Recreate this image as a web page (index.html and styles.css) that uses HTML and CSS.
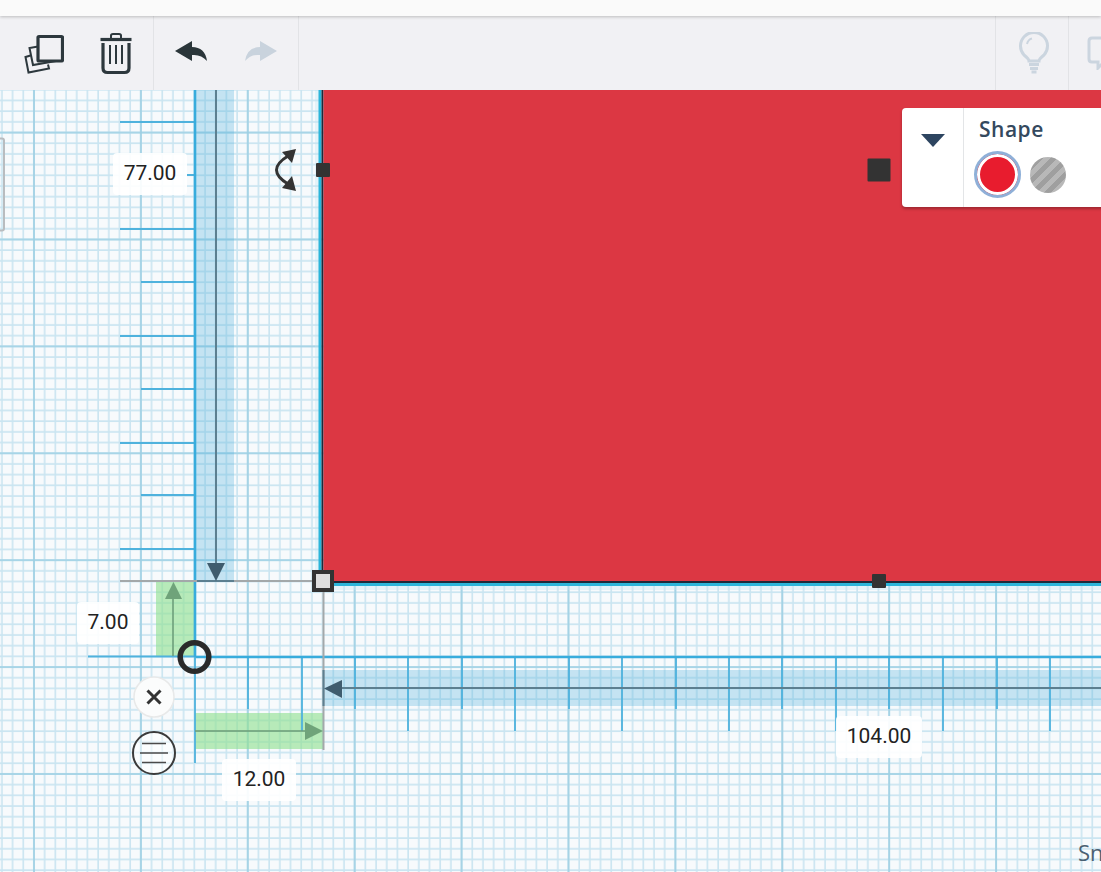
FILE: index.html
```html
<!DOCTYPE html>
<html>
<head>
    <meta charset="utf-8">
    <title>Workplane</title>
    <link rel="stylesheet" href="styles.css">
</head>
<body>
    <div class="topbar"></div>
    <div class="toolbar">
        <div class="toolgroup editgroup">
            <svg class="icon" width="40" height="40" viewBox="24 33 40 40">
                <path class="stroke thin" d="M30.500 54.500 L25.500 56 L28.500 71.500 L49 67.500 L48 63.500" fill="none" />
                <path class="stroke thin" d="M38 45.500 L29.500 47 L33 64 L56 60" fill="none" />
                <rect class="stroke" x="38" y="35.500" width="24.500" height="24.500" rx="1" fill="#f1f1f4" />
            </svg>
            <svg class="icon" width="32" height="42" viewBox="100 31 32 42">
                <path class="stroke" d="M103 41 V66 Q103 70.500 107.500 70.500 H124.500 Q129 70.500 129 66 V41" fill="none" />
                <path class="stroke" d="M100.500 37.500 H131.500" fill="none" />
                <path class="stroke thin" d="M111 36 V33.500 Q111 32 113 32 H119 Q121 32 121 33.500 V36" fill="none" />
                <path class="stroke thin" d="M110 43 V62 M116 43 V62 M122 43 V62" fill="none" />
            </svg>
        </div>
        <div class="toolgroup historygroup">
            <svg class="icon" width="32" height="22" viewBox="175 39 32 22">
                <path class="solid" d="M175 51 L192 41 V47 Q205 47 207 61 Q201 54 192 55 V61 Z" />
            </svg>
            <svg class="icon" width="32" height="22" viewBox="245 39 32 22">
                <path class="solid faded" d="M277 51 L260 41 V47 Q247 47 245 61 Q251 54 260 55 V61 Z" />
            </svg>
        </div>
        <div class="toolspacer"></div>
        <div class="toolgroup hintgroup">
            <svg class="icon" width="32" height="42" viewBox="1017 32 32 42">
                <path class="hintline" d="M1028 61 Q1028 59 1023 55 A13.500 13.500 0 1 1 1043 55 Q1038 59 1038 61 Z" fill="none" />
                <path class="hintline" d="M1028 64.500 H1038 M1029 68.500 H1037 M1030.500 72 H1035.500" fill="none" />
                <path class="hintline thin" d="M1026 44 Q1027 39.500 1031 38.500" fill="none" />
            </svg>
        </div>
        <div class="toolgroup notegroup">
            <svg class="icon" width="32" height="34" viewBox="1087 35 32 34">
                <path class="hintline" d="M1092 37 H1112 Q1115 37 1115 40 V58 Q1115 61 1112 61 H1104 L1098 67 V61 H1092 Q1089 61 1089 58 V40 Q1089 37 1092 37 Z" fill="none" />
            </svg>
        </div>
    </div>

    <div class="workplane">
        <svg class="drawing" width="1101" height="782" viewBox="0 90 1101 782">
            <defs>
                <pattern id="minor" patternUnits="userSpaceOnUse" x="29" y="127.600" width="10.690" height="10.690">
                    <path d="M5 0 V10.690 M0 5 H10.690" stroke="#cae5f1" stroke-width="1.600" fill="none" />
                </pattern>
                <pattern id="major" patternUnits="userSpaceOnUse" x="29" y="127.600" width="106.900" height="106.900">
                    <path d="M5 0 V106.900 M0 5 H106.900" stroke="#9ccfe3" stroke-width="1.600" fill="none" />
                </pattern>
            </defs>
            <rect x="0" y="90" width="1101" height="782" fill="#f7fafc" />
            <rect x="0" y="90" width="1101" height="782" fill="url(#minor)" />
            <rect x="0" y="90" width="1101" height="782" fill="url(#major)" />

            <!-- left panel edge -->
            <rect x="-6" y="138.500" width="10" height="92" rx="2" fill="none" stroke="#b9bcbf" stroke-width="2" />

            <!-- blue measure bars -->
            <rect class="measurebar" x="196" y="90" width="38" height="491" />
            <rect class="measurebar" x="323" y="670" width="778" height="36" />

            <!-- green offset bars -->
            <rect class="offsetbar" x="156" y="581" width="39" height="75" />
            <rect class="offsetbar" x="195" y="713" width="128" height="36" />

            <!-- rulers -->
            <path class="ruler" d="M120 122 H195 M187 175 H195 M120 229 H195 M141 282 H195 M120 336 H195 M141 389 H195 M120 443 H195 M141 495 H195 M120 549 H195" />
            <path class="ruler" d="M248 657 V709 M302 657 V731 M355 657 V709 M408 657 V731 M462 657 V709 M515 657 V731 M569 657 V709 M622 657 V731 M676 657 V709 M729 657 V731 M782 657 V709 M836 657 V731 M889 657 V709 M943 657 V731 M997 657 V709 M1050 657 V731" />
            <path class="ruler" d="M88 656.500 H195" />
            <path class="axis" d="M195 90 V657 M195 657 H1101" />
            <path class="ruler" d="M195 657 V763" />

            <!-- dimension lines -->
            <path class="baseline" d="M120 581 H312 M323.500 592 V750" />
            <path class="dimline" d="M216 90 V565 M197 581 H234" />
            <path class="dimarrow" d="M207 563 H225 L216 581 Z" />
            <path class="dimline" d="M340 688 H1101 M323.500 670 V706" />
            <path class="dimarrow" d="M324 688.500 L342 680 V698 Z" />
            <path class="offsetline" d="M173 598 V656 M195 731 H306" />
            <path class="offsetarrow" d="M173.500 582 L182 599 H165 Z" />
            <path class="offsetarrow" d="M323 731 L305 722 V740 Z" />

            <!-- selected shape -->
            <rect x="315" y="90" width="786" height="500" fill="#bfe6f3" opacity="0.350" />
            <path d="M320 90 V584.500 H1101" fill="none" stroke="#2bb5da" stroke-width="3" />
            <path d="M322.500 90 V582 H1101" fill="none" stroke="#1d2a3a" stroke-width="2" />
            <rect x="323.500" y="90" width="778" height="491" fill="#dc3743" />

            <!-- rotate handle -->
            <path class="rotate" d="M288 156 Q265 170 288 184" fill="none" />
            <path class="handle" d="M296 149 L282 152 L292 163 Z M296 191 L282 188 L292 176 Z" />

            <!-- size handles -->
            <rect class="handle" x="316" y="163" width="14" height="14" rx="1" />
            <rect class="handle" x="872" y="574" width="14" height="14" rx="1" />
            <rect class="handle" x="867.500" y="158.500" width="23" height="23" rx="1" />
            <rect x="314" y="572" width="18" height="18" fill="#dedede" stroke="#333333" stroke-width="4" />

            <!-- origin controls -->
            <circle cx="194.500" cy="657" r="14.300" fill="none" stroke="#2a2a2a" stroke-width="5.500" />
            <circle cx="154" cy="697" r="20" fill="#fbfcfc" stroke="#e8e9e9" stroke-width="1.500" />
            <path d="M147.500 690.500 L160.500 703.500 M160.500 690.500 L147.500 703.500" stroke="#333333" stroke-width="3" fill="none" />
            <circle cx="154" cy="753" r="21" fill="#ffffff" fill-opacity="0.500" stroke="#3b3b3b" stroke-width="2" />
            <path d="M142 743.500 H166 M140 753 H168 M142 762.500 H166" stroke="#4a4a4a" stroke-width="1.500" fill="none" />
        </svg>

        <div class="dimlabel label77">77.00</div>
        <div class="dimlabel label7">7.00</div>
        <div class="dimlabel label12">12.00</div>
        <div class="dimlabel label104">104.00</div>

        <div class="shapepanel">
            <div class="paneltoggle"><span class="caret"></span></div>
            <div class="panelbody">
                <div class="paneltitle">Shape</div>
                <div class="swatches">
                    <span class="swatch solidswatch"></span>
                    <span class="swatch holeswatch"></span>
                </div>
            </div>
        </div>

        <div class="snapgrid">Snap Grid</div>
    </div>
</body>
</html>
```

FILE: styles.css
```css
html, body {
    margin: 0;
    height: 100%;
    overflow: hidden;
}
body {
    display: flex;
    flex-direction: column;
    font-family: "Open Sans", sans-serif;
    background: #f1f1f4;
}

.topbar {
    height: 16px;
    background: #fafafa;
    box-shadow: 0 1px 3px rgba(0, 0, 0, 0.22);
    position: relative;
    z-index: 1;
}

.toolbar {
    height: 74px;
    display: flex;
    background: #f1f1f4;
}
.toolgroup {
    display: flex;
    align-items: center;
    box-sizing: border-box;
    border-right: 1px solid #e2e3e6;
}
.toolspacer {
    flex: 1;
}
.editgroup {
    width: 154px;
    padding: 2px 0 0 24px;
    gap: 36px;
}
.historygroup {
    width: 145px;
    padding: 0 0 6px 21px;
    gap: 38px;
}
.hintgroup {
    width: 74px;
    padding: 0 0 0 22px;
    border-left: 1px solid #e2e3e6;
}
.notegroup {
    width: 32px;
    padding-left: 18px;
    border-right: 0;
    overflow: hidden;
}
.icon {
    display: block;
    flex: none;
}
.stroke {
    stroke: #2d383d;
    stroke-width: 3.200;
}
.thin {
    stroke-width: 2;
}
.solid {
    fill: #2a3539;
}
.faded {
    fill: #c9d3dd;
}
.hintline {
    stroke: #cbd5df;
    stroke-width: 3;
}
.hintline.thin {
    stroke-width: 2;
}

.workplane {
    position: relative;
    flex: 1;
    overflow: hidden;
}
.drawing {
    display: block;
    filter: blur(0.4px);
}
.measurebar {
    fill: #4fb0dc;
    opacity: 0.3;
}
.offsetbar {
    fill: #8fe08f;
    opacity: 0.62;
}
.ruler {
    stroke: #4fb2dd;
    stroke-width: 1.800;
    fill: none;
}
.axis {
    stroke: #38acdc;
    stroke-width: 2.600;
    fill: none;
}
.baseline {
    stroke: #a3a8aa;
    stroke-width: 2;
    fill: none;
}
.dimline {
    stroke: #5c7f90;
    stroke-width: 2;
    fill: none;
}
.dimarrow {
    fill: #3f5c6e;
}
.offsetline {
    stroke: #6c9c78;
    stroke-width: 1.500;
    fill: none;
}
.offsetarrow {
    fill: #6fa37a;
}
.rotate {
    stroke: #333333;
    stroke-width: 3;
}
.handle {
    fill: #333333;
}

/* dimension values sit on the drawing, so they take its coordinates */
.dimlabel {
    position: absolute;
    box-sizing: border-box;
    height: 42px;
    padding-bottom: 2px;
    display: flex;
    align-items: center;
    justify-content: center;
    border-radius: 4px;
    background: rgba(255, 255, 255, 0.92);
    font-family: Roboto, sans-serif;
    font-size: 21px;
    color: #222222;
}
.label77 {
    left: 113px;
    top: 63px;
    width: 74px;
}
.label7 {
    left: 77px;
    top: 512px;
    width: 62px;
}
.label12 {
    left: 222px;
    top: 669px;
    width: 74px;
}
.label104 {
    left: 836px;
    top: 626px;
    width: 86px;
}

.shapepanel {
    position: absolute;
    left: 902px;
    top: 18px;
    width: 220px;
    height: 99px;
    display: flex;
    background: #ffffff;
    border-radius: 4px;
    box-shadow: 0 2px 3px rgba(0, 0, 0, 0.28);
}
.paneltoggle {
    width: 61px;
    border-right: 1px solid #e3e5e7;
    display: flex;
    justify-content: center;
    padding-top: 26px;
}
.caret {
    width: 0;
    height: 0;
    border-left: 12px solid transparent;
    border-right: 12px solid transparent;
    border-top: 13px solid #2d4560;
}
.panelbody {
    padding: 6px 0 0 10px;
}
.paneltitle {
    padding-left: 5px;
    font-size: 21px;
    font-weight: 600;
    letter-spacing: 0.5px;
    line-height: 30px;
    color: #34495e;
}
.swatches {
    display: flex;
    align-items: center;
    gap: 9px;
    margin-top: 7px;
}
.swatch {
    display: block;
    box-sizing: border-box;
    border-radius: 50%;
}
.solidswatch {
    width: 47px;
    height: 47px;
    background: #e81c2e;
    border: 3px solid #8fb0d8;
    box-shadow: inset 0 0 0 3px #ffffff;
}
.holeswatch {
    width: 36px;
    height: 36px;
    background: repeating-linear-gradient(135deg, #b8b8b8 0 5px, #9f9f9f 5px 10px);
}

.snapgrid {
    position: absolute;
    left: 1078px;
    top: 747px;
    white-space: nowrap;
    font-size: 22px;
    color: #4a6072;
}
```
